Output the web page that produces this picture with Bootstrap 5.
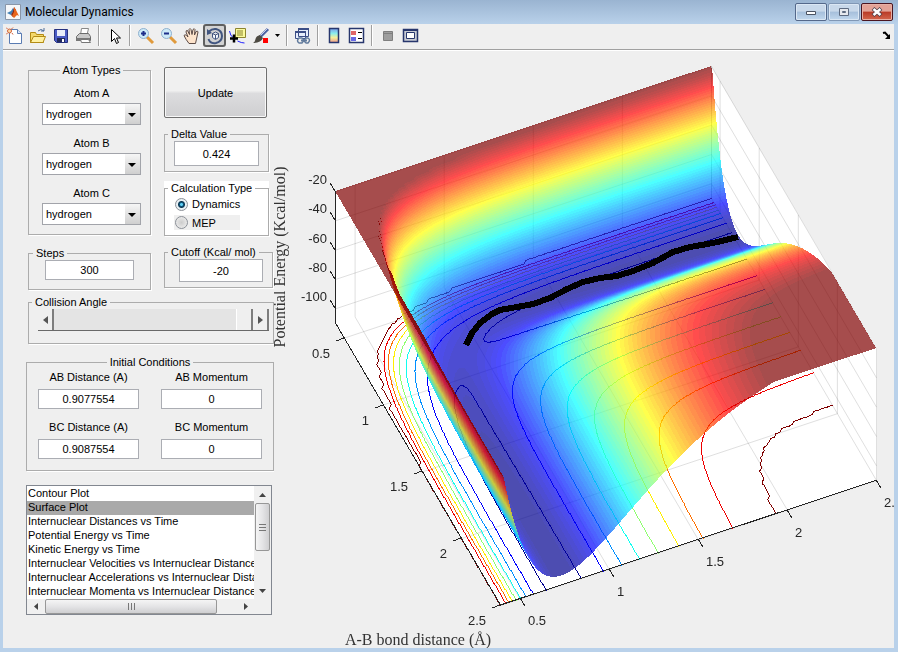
<!DOCTYPE html>
<html lang="en">
<head>
<meta charset="utf-8">
<meta name="viewport" content="width=device-width, initial-scale=1">
<title>Molecular Dynamics</title>
<link rel="stylesheet" href="https://cdn.jsdelivr.net/npm/bootstrap@5.3.0/dist/css/bootstrap.min.css">
<style>
body { font-family: "Liberation Sans", Arial, sans-serif; font-size: 11px; line-height: 14px; color: #000; background: #b9d1ea; }
.window-frame { padding: 0 4px 4px 3px; background: linear-gradient(#9ab4d1 0, #b9d1ea 24px); }
.title-strip { height: 24px; padding: 0 1px 0 2px; font: 12px Roboto, sans-serif; }
.win-btn { width: 32px; height: 18px; padding: 0; margin-left: 1px; border: 1px solid #54688a; border-radius: 2px; background: linear-gradient(#c8d8ea 0 45%, #a6bfdb 50%, #c2d8ee); box-shadow: inset 0 0 0 1px #dbe7f4; line-height: 0; }
.win-btn svg { display: block; margin: auto; }
.win-soft { border-color: #8097b5; }
.win-close { border-color: #4a1520; background: linear-gradient(#e3a296 0 45%, #b93b27 50%, #d4674e); box-shadow: inset 0 0 0 1px #e8b0a5; }
.tools { height: 27px; padding-bottom: 3px; background: #efefef; border-bottom: 1px solid #fff; box-shadow: inset 0 -1px #a0a0a0; }
.tool-btn { width: 23px; height: 23px; padding: 0; border: 1px solid transparent; border-radius: 3px; background: none; display: flex; align-items: center; justify-content: center; }
.tool-on { border: 2px solid #606060; background: #d2d2d2; }
.tool-drop { width: 11px; }
.tool-dock { width: 15px; }
.tool-gap { width: 2px; height: 21px; margin: 0 3px; border-left: 1px solid #a0a0a0; background: #fff; }
.client { background: #efefef; }
.side { width: 251px; padding: 12px 0 0 3px; margin-left: 20px; }
.col-a { width: 123px; margin-left: 2px; }
.col-b { width: 105px; margin-left: 13px; padding-top: 4px; display: flex; flex-direction: column; gap: 9px; }
.group-box { min-width: 0; border: 1px solid #acacac; box-shadow: 1px 1px #fff; padding: 0 9px 5px; }
.group-box > legend { float: none; width: auto; margin: 0; padding: 0 3px; font-size: 11px; line-height: 14px; }
.legend-left > legend { margin-left: -6px; }
.atoms-box { padding: 0 8px 9px 12px; }
.steps-box { padding: 0 16px 9px; margin-top: 11px; }
.steps-box > legend { margin-left: -12px; }
.calc-box { padding: 0 9px 5px; }
.cutoff-box { margin-right: -4px; padding-left: 14px; }
.cutoff-box > legend { margin-left: -11px; }
.angle-box { margin: 5px 0 0 2px; padding: 0 4px 12px 9px; }
.start-box { margin-top: 11px; }
.pick-label { display: block; line-height: 16px; margin-bottom: 2px; text-align: center; }
.pick { appearance: none; display: block; width: 99px; height: 22px; margin: 0 auto 10px; padding: 0 18px 0 3px; border: 1px solid #a2a4aa; border-radius: 0; color: #000;
  background: url("data:image/svg+xml,%3Csvg xmlns='http://www.w3.org/2000/svg' width='15' height='20'%3E%3ClinearGradient id='g' x2='0' y2='1'%3E%3Cstop stop-color='%23f6f6f6'/%3E%3Cstop offset='1' stop-color='%23cfcfcf'/%3E%3C/linearGradient%3E%3Cpath fill='url(%23g)' d='M0 0h15v20H0z'/%3E%3Cpath d='M3 9h8l-4 4z'/%3E%3C/svg%3E") no-repeat right center #fff; }
.pick:last-child { margin-bottom: 0; }
.entry { display: block; width: 100%; height: 20px; padding: 0; border: 1px solid #abadb3; border-radius: 0; background: #fff; text-align: center; color: #000; }
.entry-mid { height: 23px; }
.entry-tall { height: 25px; }
.update-btn { height: 51px; width: 103px; border: 1px solid #707070; border-radius: 2px; background: linear-gradient(#f0f0f0 0 46%, #dcdcde 52%, #cfcfd1); box-shadow: inset 0 0 0 1px #f8f8f8; color: #000; }
.radio-row { height: 18px; }
.radio-row input { appearance: none; width: 13px; height: 13px; margin: 0 4px 0 1px; border: 1px solid #8b9097; border-radius: 50%; background: radial-gradient(#ccc, #f4f4f4); }
.radio-row input:checked { background: radial-gradient(#5fd0f5 0 1px, #0c5279 2px, #0b3852 3px, #e8f0f4 4px); }
.radio-dim { width: 66px; height: 15px; background: #efefef; margin-top: 2px; }
.slide-row { height: 22px; border-bottom: 1px solid #696969; }
.slide-btn { width: 16px; padding: 0; border: 0; border-right: 2px solid #7d7d7d; background: #efefef; line-height: 0; }
.slide-range { appearance: none; height: 21px; margin: 0; background: #e4e4e4; min-width: 0; }
.slide-range::-webkit-slider-thumb { appearance: none; width: 17px; height: 21px; border: 0; border-left: 1px solid #fff; border-right: 2px solid #7d7d7d; background: #efefef; }
.cond-grid { display: grid; grid-template-columns: 1fr 1fr; column-gap: 22px; row-gap: 10px; padding: 0 2px 6px; }
.cond-grid label { display: block; text-align: center; line-height: 16px; margin-bottom: 4px; }
.plots-box { width: 246px; margin-top: 14px; border: 1px solid #828790; background: #fff; }
.plots-list { appearance: none; display: block; flex: 1; min-width: 0; height: 113px; padding: 1px 0 0; border: 0; outline: 0; overflow: hidden; background: #fff; color: #000; }
.plots-list option { padding: 0 0 0 1px; height: 14px; min-height: 14px; line-height: 14px; font-size: 11px; }
.plots-list option:checked { background: #a9a9a9 linear-gradient(#a9a9a9, #a9a9a9); color: #000; }
.bar-y { width: 17px; background: #f0f0f0; }
.bar-x { height: 15px; background: #f0f0f0; }
.bar-btn { width: 17px; height: 17px; padding: 0; border: 0; background: none; display: flex; align-items: center; justify-content: center; }
.bar-x .bar-btn { height: 15px; width: 18px; }
.grip-y { width: 15px; height: 48px; margin-left: 1px; border: 1px solid #979797; border-radius: 2px; background: linear-gradient(90deg, #f5f5f5, #e4e4e6 50%, #cfcfd1); display: flex; align-items: center; justify-content: center; }
.grip-x { width: 172px; height: 15px; border: 1px solid #979797; border-radius: 2px; background: linear-gradient(#f5f5f5, #e4e4e6 50%, #cfcfd1); display: flex; align-items: center; justify-content: center; }
.plot-area { display: grid; min-width: 0; overflow: hidden; align-content: start; }
.plot-area > * { grid-area: 1 / 1; width: 100%; height: auto; display: block; }
.tick-text { font: 13px "Liberation Sans", Arial, sans-serif; fill: #262626; }
.axis-text { font: 16px "Liberation Serif", "Times New Roman", serif; fill: #333; }
</style>
<script src="https://cdn.jsdelivr.net/npm/bootstrap@5.3.0/dist/js/bootstrap.bundle.min.js"></script>
</head>
<body>
<div class="window-frame min-vh-100 d-flex flex-column">
  <header class="title-strip d-flex align-items-center">
    <svg width="16" height="16" viewBox="0 0 16 16" aria-hidden="true"><path fill="#f5f7fa" stroke="#8996a8" d="M.5.5h15v15H.5z"/><path fill="#3f7fb5" d="M2 9l4-2 2-3 1 2-3 5z"/><path fill="#8c2a14" d="M6 11l2-4 1-4 2 3-1 5-2 2z"/><path fill="#e8641b" d="M9 3l2 3 3 6-2-1-3 3-2-2 2-4z"/></svg>
    <span class="ms-1 flex-grow-1">Molecular Dynamics</span>
    <button class="win-btn" aria-label="Minimize"><svg width="12" height="10"><path fill="#fff" stroke="#4b5362" d="M1.500 4.500h9v3h-9z"/></svg></button>
    <button class="win-btn win-soft" aria-label="Maximize"><svg width="12" height="10"><path fill="#e6e9ee" stroke="#5d6a80" fill-rule="evenodd" d="M1.500 1.500h9v7h-9zM4.500 4.500h3v1h-3z"/></svg></button>
    <button class="win-btn win-close" aria-label="Close"><svg width="14" height="10"><path stroke="#50404a" stroke-width="4" d="M3 1.500l8 7m0-7l-8 7"/><path stroke="#fff" stroke-width="2.500" d="M3.500 2l7 6m0-6l-7 6"/></svg></button>
  </header>

  <nav class="tools d-flex align-items-center" aria-label="Figure tools">
    <button class="tool-btn" aria-label="New"><svg width="18" height="18"><path fill="#fff" stroke="#5a7cb2" d="M3.500 2.500h8l4 4v10h-12z"/><path fill="#dbe7fb" stroke="#5a7cb2" d="M11.500 2.500v4h4"/><circle cx="3.500" cy="4" r="2" fill="#ffd9a0" stroke="#d2603a"/><path stroke="#d2603a" d="M0 .5l1.500 1.500M0 7.500l1.500-1.500M6 6l1 1.500M5.500 2L7 .5"/></svg></button>
    <button class="tool-btn" aria-label="Open"><svg width="18" height="18"><path fill="#f4d86a" stroke="#b38b14" d="M1.500 15.500v-10h5l1 2h7v8z"/><path fill="#fff0a0" stroke="#b38b14" d="M1.500 15.500l3-6h12l-2.500 6z"/><path fill="none" stroke="#4d6d99" d="M9 4q3-3 6 0m0-3v3h-3"/></svg></button>
    <button class="tool-btn" aria-label="Save"><svg width="18" height="18"><path fill="#4b5cc4" stroke="#26317f" d="M2.500 2.500h13v13h-11l-2-2z"/><path fill="#e9edf9" d="M5 3h8v6H5z"/><path fill="#222a5c" d="M5 11h8v4H5z"/><path fill="#fff" d="M10 12h2v3h-2z"/></svg></button>
    <button class="tool-btn" aria-label="Print"><svg width="18" height="18"><path fill="#fff" stroke="#888" d="M5.500 8l1-6.500h7L12 8"/><path fill="#c9c9c9" stroke="#6b6b6b" d="M1.500 9.500l3-3h9l2 3v4h-14z"/><path fill="#777" d="M1 11h14v3H1z"/><path fill="#fff" stroke="#777" d="M5.500 12.500h8l2 3h-9z"/></svg></button>
    <span class="tool-gap"></span>
    <button class="tool-btn" aria-label="Select"><svg width="18" height="18"><path fill="#fff" stroke="#000" d="M5.500 2.500v12l3-3 2 5 2-1-2-4.500h4z"/></svg></button>
    <span class="tool-gap"></span>
    <button class="tool-btn" aria-label="Zoom in"><svg width="18" height="18"><path stroke="#e09a3c" stroke-width="3" d="M10 10l6 6"/><circle cx="6.500" cy="6.500" r="5" fill="#cdeaf7" stroke="#8fb0cf"/><path stroke="#1d2e8a" stroke-width="2" d="M4 6.500h5M6.500 4v5"/></svg></button>
    <button class="tool-btn" aria-label="Zoom out"><svg width="18" height="18"><path stroke="#e09a3c" stroke-width="3" d="M10 10l6 6"/><circle cx="6.500" cy="6.500" r="5" fill="#cdeaf7" stroke="#8fb0cf"/><path stroke="#1d2e8a" stroke-width="2" d="M4 6.500h5"/></svg></button>
    <button class="tool-btn" aria-label="Pan"><svg width="18" height="18"><path fill="#fde4cc" stroke="#5b4a45" d="M6 16.500Q2.500 12 1 8.500q1-1.500 2.500 0l1.500 1.500-2-5q0-2 1.500-1.500l2 4-.5-5q1-2 2 0l1 5 1-5q1.500-1.500 2 0l-.5 5.500 1.500-3.500q2-1 2 .5l-1.500 7-1 4.500z"/></svg></button>
    <button class="tool-btn tool-on" aria-label="Rotate 3D" aria-pressed="true"><svg width="18" height="18"><path fill="none" stroke="#41557f" stroke-width="2" d="M3 4.500q3-3 7-2.500 6 1.500 6 7t-6 7Q4 17 2.500 12"/><path fill="#41557f" d="M1 2v6l5-2z"/><path fill="#f4f6fa" stroke="#41557f" d="M6.500 6.500l3-1.500 3 1.500v4l-3 2-3-2zl3 1.500 3-1.500M9.500 8v4"/></svg></button>
    <button class="tool-btn" aria-label="Data cursor"><svg width="18" height="18"><path fill="#fafa9c" stroke="#8c8430" d="M6.500 1.500h10v9h-10z"/><path stroke="#8c8430" d="M8 4h6M8 6h6M8 8h6"/><path fill="none" stroke="#22f" d="M.5 4q1 5 3 6m5 4q4 2 7 2"/><path stroke="#000" stroke-width="2.500" d="M1 11.500h8M5 7.500v8"/></svg></button>
    <button class="tool-btn" aria-label="Brush"><svg width="18" height="18"><path stroke="#4b62a3" stroke-width="3" d="M16 2l-8 8"/><path stroke="#c5d0ec" d="M16 1L8 9"/><path fill="#4d4a42" d="M8 8l3 3q-2 5-10 5 2-1 2.500-4T8 8z"/><path fill="#f00" d="M11 11h5v5h-5z"/></svg></button>
    <button class="tool-btn tool-drop" aria-label="Brush options"><svg width="7" height="4"><path d="M1 0h5L3.500 3z"/></svg></button>
    <span class="tool-gap"></span>
    <button class="tool-btn" aria-label="Link plot"><svg width="18" height="18"><path fill="#e7eefc" stroke="#3c4e86" d="M4.500 1.500h10v8h-10zM1.500 4.500h10v7h-10z"/><path stroke="#3c4e86" stroke-width="2" d="M4 2h11M1 5h11"/><path fill="#efefef" stroke="#617b9d" stroke-width="1.500" d="M5 11h3q3 2 0 5H5q-3-2 0-5zm7 0h2q3 2 0 5h-2q-3-2 0-5z"/><path stroke="#617b9d" stroke-width="2" d="M7 13.500h6"/></svg></button>
    <span class="tool-gap"></span>
    <button class="tool-btn" aria-label="Colorbar"><svg width="18" height="18"><defs><linearGradient id="cb" x2="0" y2="1"><stop stop-color="#7b9bea"/><stop offset=".35" stop-color="#89edee"/><stop offset=".65" stop-color="#f5ef9b"/><stop offset="1" stop-color="#f09a8c"/></linearGradient></defs><path fill="url(#cb)" stroke="#27366d" stroke-width="1.500" d="M4.500 1.500h9v14h-9z"/></svg></button>
    <button class="tool-btn" aria-label="Legend"><svg width="18" height="18"><path fill="#fff" stroke="#27366d" stroke-width="1.500" d="M1.500 1.500h14v14h-14z"/><path fill="#e06666" d="M3 4h5v4H3z"/><path fill="#6868e4" d="M3 10h5v4H3z"/><path stroke="#000" d="M10 5.500h4M10 11.500h4"/></svg></button>
    <span class="tool-gap"></span>
    <button class="tool-btn" aria-label="Hide plot tools"><svg width="18" height="18"><path fill="#9e9e9e" stroke="#7f7f7f" d="M4.500 4.500h9v9h-9z"/><path stroke="#7f7f7f" d="M4 6.500h10"/></svg></button>
    <button class="tool-btn" aria-label="Show plot tools"><svg width="18" height="18"><path fill="#c9ccd4" stroke="#27366d" stroke-width="1.500" d="M1.500 2.500h14v12h-14z"/><path stroke="#27366d" stroke-width="2" d="M1 3h15"/><path fill="#fff" stroke="#27366d" d="M4.500 5.500h8v6h-8z"/></svg></button>
    <button class="tool-btn tool-dock ms-auto" aria-label="Dock"><svg width="9" height="9"><path fill="none" stroke="#000" stroke-width="2" d="M1 2l2-.5 4 4.500"/><path d="M8 3v5H3z"/></svg></button>
  </nav>

  <main class="client d-flex flex-grow-1 align-items-start overflow-hidden">
    <form class="side flex-shrink-0" onsubmit="return false">
      <div class="d-flex">
        <div class="col-a">
          <fieldset class="group-box atoms-box">
            <legend class="mx-auto">Atom Types</legend>
            <div class="pt-2">
              <label class="pick-label" for="atomA">Atom A</label>
              <select class="pick" id="atomA"><option>hydrogen</option></select>
              <label class="pick-label" for="atomB">Atom B</label>
              <select class="pick" id="atomB"><option>hydrogen</option></select>
              <label class="pick-label" for="atomC">Atom C</label>
              <select class="pick" id="atomC"><option>hydrogen</option></select>
            </div>
          </fieldset>
          <fieldset class="group-box steps-box">
            <legend><label for="steps">Steps</label></legend>
            <input class="entry" id="steps" value="300">
          </fieldset>
        </div>
        <div class="col-b">
          <button class="update-btn">Update</button>
          <fieldset class="group-box legend-left">
            <legend><label for="delta">Delta Value</label></legend>
            <input class="entry entry-tall" id="delta" value="0.424">
          </fieldset>
          <div class="bg-white">
            <fieldset class="group-box legend-left calc-box">
              <legend>Calculation Type</legend>
              <div class="radio-row d-flex align-items-center"><input type="radio" name="calc" id="dyn" checked><label for="dyn">Dynamics</label></div>
              <div class="radio-row radio-dim d-flex align-items-center"><input type="radio" name="calc" id="mep"><label for="mep">MEP</label></div>
            </fieldset>
          </div>
          <fieldset class="group-box cutoff-box">
            <legend><label for="cutoff">Cutoff (Kcal/ mol)</label></legend>
            <input class="entry entry-mid" id="cutoff" value="-20">
          </fieldset>
        </div>
      </div>
      <fieldset class="group-box legend-left angle-box">
        <legend><label for="angle">Collision Angle</label></legend>
        <div class="slide-row d-flex">
          <button class="slide-btn" aria-label="Decrease"><svg width="5" height="8"><path fill="#555" d="M5 0v8L0 4z"/></svg></button>
          <input class="slide-range flex-grow-1" id="angle" type="range" min="0" max="180" value="180">
          <button class="slide-btn" aria-label="Increase"><svg width="5" height="8"><path fill="#555" d="M0 0v8l5-4z"/></svg></button>
        </div>
      </fieldset>
      <fieldset class="group-box start-box">
        <legend class="mx-auto">Initial Conditions</legend>
        <div class="cond-grid">
          <div><label for="abd">AB Distance (A)</label><input class="entry" id="abd" value="0.9077554"></div>
          <div><label for="abm">AB Momentum</label><input class="entry" id="abm" value="0"></div>
          <div><label for="bcd">BC Distance (A)</label><input class="entry" id="bcd" value="0.9087554"></div>
          <div><label for="bcm">BC Momentum</label><input class="entry" id="bcm" value="0"></div>
        </div>
      </fieldset>
      <div class="plots-box">
        <div class="d-flex">
          <select class="plots-list" size="8" aria-label="Plot type">
            <option>Contour Plot</option>
            <option selected>Surface Plot</option>
            <option>Internuclear Distances vs Time</option>
            <option>Potential Energy vs Time</option>
            <option>Kinetic Energy vs Time</option>
            <option>Internuclear Velocities vs Internuclear Distance</option>
            <option>Internuclear Accelerations vs Internuclear Distance</option>
            <option>Internuclear Momenta vs Internuclear Distance</option>
          </select>
          <div class="bar-y d-flex flex-column">
            <button class="bar-btn" aria-label="Scroll up"><svg width="7" height="4"><path fill="#444" d="M0 4h7L3.500 0z"/></svg></button>
            <div class="grip-y"><svg width="7" height="8"><path stroke="#777" d="M0 1.500h7M0 4.500h7M0 7.500h7"/></svg></div>
            <button class="bar-btn mt-auto" aria-label="Scroll down"><svg width="7" height="4"><path fill="#444" d="M0 0h7L3.500 4z"/></svg></button>
          </div>
        </div>
        <div class="bar-x d-flex">
          <button class="bar-btn" aria-label="Scroll left"><svg width="4" height="7"><path fill="#444" d="M4 0v7L0 3.500z"/></svg></button>
          <div class="grip-x"><svg width="8" height="7"><path stroke="#777" d="M1.500 0v7M4.500 0v7M7.500 0v7"/></svg></div>
          <button class="bar-btn ms-auto me-3" aria-label="Scroll right"><svg width="4" height="7"><path fill="#444" d="M0 0v7l4-3.500z"/></svg></button>
        </div>
      </div>
    </form>

    <section class="plot-area flex-grow-1">
      <canvas id="surface" width="620" height="597"></canvas>
      <svg id="axes" viewBox="274 51 620 597" role="img" aria-label="Potential energy surface">
        <g id="ticks" stroke="#262626" shape-rendering="crispEdges" fill="none"><path d="M335.500 191V323L500.500 605L877 480"/></g>
        <polyline fill="none" stroke="#000" stroke-width="6" stroke-linejoin="round" shape-rendering="crispEdges" points="466,345 472,333 480,323 492,314 500,310 517,307 533,304 550,298 567,289 583,282 600,278 617,276 633,271 653,263 673,252 690,247 713,243 738,237"/>
        <text class="axis-text" text-anchor="middle" x="418" y="645">A-B bond distance (Å)</text>
        <text class="axis-text" text-anchor="middle" transform="translate(285 257) rotate(-90)">Potential Energy (Kcal/mol)</text>
      </svg>
    </section>
  </main>
</div>
<script>
// Plot box: a = A-B distance, b = B-C distance (both 0.39..2.5), z = energy (-110..-20)
const R0 = 0.39, R1 = 2.5, ZMIN = -110, ZMAX = -20, OX = 274, OY = 51;
const project = (a, b, z) => {
  const u = (a - R0) / (R1 - R0), v = (b - R0) / (R1 - R0), h = (z - ZMIN) / (ZMAX - ZMIN);
  return [335 + 165 * u + 376 * v, 323 + 282 * u - 125 * v - 132 * h];
};

// LEPS potential for collinear H + H2
const D = 103.8, BETA = 1.942, RE = 0.735, K = 0.187;
const terms = r => {
  const e = Math.exp(-BETA * (r - RE)), e2 = e * e;
  return [D / 4 * ((3 + K) * e2 - (2 + 6 * K) * e), D / 4 * ((1 + 3 * K) * e2 - (6 + 2 * K) * e)];
};
const energy = (a, b) => {
  const [q1, j1] = terms(a), [q2, j2] = terms(b), [q3, j3] = terms(a + b);
  const s = Math.sqrt(((j1 - j2) ** 2 + (j2 - j3) ** 2 + (j3 - j1) ** 2) / 2);
  return Math.min(ZMAX, (q1 + q2 + q3 - s) / (1 + K));
};

const cv = document.getElementById('surface'), W = cv.width, H = cv.height, ctx = cv.getContext('2d');
ctx.fillStyle = '#efefef'; ctx.fillRect(0, 0, W, H);
ctx.fillStyle = '#fff'; ctx.beginPath();
[[335,191],[711,66],[877,348],[877,480],[500,605],[335,323]].forEach(([x, y]) => ctx.lineTo(x - OX, y - OY));
ctx.fill();

ctx.strokeStyle = 'rgba(38,38,38,.15)';
const seg = (p, q) => { ctx.beginPath(); ctx.moveTo(p[0] - OX + .5, p[1] - OY + .5); ctx.lineTo(q[0] - OX + .5, q[1] - OY + .5); ctx.stroke(); };
for (const t of [.5, 1, 1.5, 2, 2.5]) {
  seg(project(t, R0, ZMIN), project(t, R1, ZMIN)); seg(project(t, R1, ZMIN), project(t, R1, ZMAX));
  seg(project(R0, t, ZMIN), project(R1, t, ZMIN)); seg(project(R0, t, ZMIN), project(R0, t, ZMAX));
}
for (const z of [-100, -80, -60, -40, -20]) { seg(project(R0, R0, z), project(R0, R1, z)); seg(project(R0, R1, z), project(R1, R1, z)); }
seg(project(R0, R1, ZMIN), project(R0, R1, ZMAX));

const img = ctx.getImageData(0, 0, W, H), px = img.data;
const jet = z => {
  const t = Math.max(0, Math.min(1, (z + D) / (ZMAX + D)));
  const q = (Math.floor(Math.min(63, t * 64)) + 1) / 64 * 4;
  const f = c => 255 * Math.max(0, Math.min(1, 1.5 - Math.abs(q - c)));
  return [f(3), f(2), f(1)];
};
const put = (x, y, c, al) => {
  x -= OX; y -= OY;
  if (x < 0 || y < 0 || x >= W || y >= H) return;
  const i = (y * W + x) * 4;
  for (let k = 0; k < 3; k++) px[i + k] = c[k] * al + px[i + k] * (1 - al);
};
const line = (p, q, c) => {
  const n = Math.max(1, Math.ceil(Math.max(Math.abs(q[0] - p[0]), Math.abs(q[1] - p[1]))));
  for (let i = 0; i <= n; i++) put(Math.round(p[0] + (q[0] - p[0]) * i / n), Math.round(p[1] + (q[1] - p[1]) * i / n), c, 1);
};

// Contours on the floor by marching squares
const N = 105, at = i => R0 + (R1 - R0) * i / N, Z = [];
for (let i = 0; i <= N; i++) { Z[i] = []; for (let j = 0; j <= N; j++) Z[i][j] = energy(at(i), at(j)); }
for (let lv = -100; lv <= -20; lv += 10) {
  const L = lv === -20 ? -20.01 : lv, col = jet(-D + (lv + 100) * (D + ZMAX) / 80);
  for (let i = 0; i < N; i++) for (let j = 0; j < N; j++) {
    const c = [[i, j], [i + 1, j], [i + 1, j + 1], [i, j + 1]], hits = [];
    for (let k = 0; k < 4; k++) {
      const [i1, j1] = c[k], [i2, j2] = c[(k + 1) % 4], z1 = Z[i1][j1], z2 = Z[i2][j2];
      if ((z1 < L) !== (z2 < L)) { const t = (L - z1) / (z2 - z1); hits.push(project(at(i1 + (i2 - i1) * t), at(j1 + (j2 - j1) * t), ZMIN)); }
    }
    for (let k = 0; k + 1 < hits.length; k += 2) line(hits[k], hits[k + 1], col);
  }
}

// Translucent surface, painted back to front
const tri = (A, B, C) => {
  const den = (B[0] - A[0]) * (C[1] - A[1]) - (C[0] - A[0]) * (B[1] - A[1]);
  if (Math.abs(den) < 1e-9) return;
  const y0 = Math.ceil(Math.min(A[1], B[1], C[1])), y1 = Math.max(A[1], B[1], C[1]);
  for (let y = y0; y < y1; y++) {
    const xs = [];
    for (const [P, Q] of [[A, B], [B, C], [C, A]]) {
      if ((P[1] <= y) !== (Q[1] <= y)) {
        const [S, T] = P[1] < Q[1] ? [P, Q] : [Q, P];
        xs.push(S[0] + (T[0] - S[0]) * (y - S[1]) / (T[1] - S[1]));
      }
    }
    if (xs.length < 2) continue;
    const a = Math.min(xs[0], xs[1]), b = Math.max(xs[0], xs[1]);
    for (let x = Math.ceil(a); x < b; x++) {
      const wB = ((x - A[0]) * (C[1] - A[1]) - (C[0] - A[0]) * (y - A[1])) / den;
      const wC = ((B[0] - A[0]) * (y - A[1]) - (x - A[0]) * (B[1] - A[1])) / den;
      put(x, y, jet(A[2] + (B[2] - A[2]) * wB + (C[2] - A[2]) * wC), .7);
    }
  }
};
const V = Z.map((row, i) => row.map((z, j) => { const [x, y] = project(at(i), at(j), z); return [x - .4863, y - .4863, z]; }));
for (let i = 0; i < N; i++) for (let j = N - 1; j >= 0; j--) {
  tri(V[i][j], V[i][j + 1], V[i + 1][j + 1]);
  tri(V[i][j], V[i + 1][j + 1], V[i + 1][j]);
}
ctx.putImageData(img, 0, 0);

// Ticks and their labels
const NS = 'http://www.w3.org/2000/svg', axes = document.getElementById('axes'), ticks = document.getElementById('ticks');
const tick = (x, y, dx, dy, text, tx, ty, anchor) => {
  const l = document.createElementNS(NS, 'path');
  l.setAttribute('d', `M${Math.round(x)} ${Math.round(y)}l${dx} ${dy}`); ticks.append(l);
  const t = document.createElementNS(NS, 'text');
  t.setAttribute('class', 'tick-text'); t.setAttribute('text-anchor', anchor);
  t.setAttribute('x', Math.round(x + tx)); t.setAttribute('y', Math.round(y + ty)); t.textContent = text; axes.append(t);
};
for (const z of [-20, -40, -60, -80, -100]) { const [x, y] = project(R0, R0, z); tick(x, y, -5, -8, z, -8, -7, 'end'); }
for (const t of [.5, 1, 1.5, 2, 2.5]) {
  const [x, y] = project(t, R0, ZMIN); tick(x, y, -8, 3, t, -14, 20, 'end');
  const [p, q] = project(R1, t, ZMIN); tick(p, q, 5, 8, t, 8, 27, 'start');
}
</script>
</body>
</html>
